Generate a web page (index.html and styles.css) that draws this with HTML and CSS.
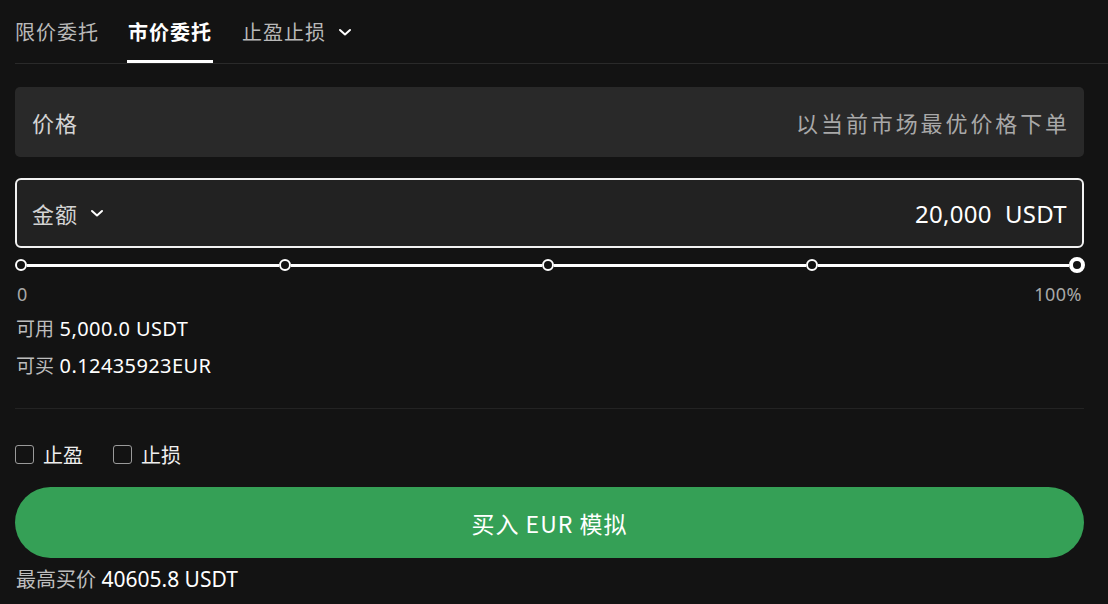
FILE: index.html
```html
<!DOCTYPE html>
<html lang="zh-CN">
<head>
  <meta charset="UTF-8">
  <meta name="viewport" content="width=device-width, initial-scale=1.0">
  <title>市价委托</title>
  <link rel="stylesheet" href="styles.css">
</head>
<body>

  <div class="tabs">
    <div class="tab">限价委托</div>
    <div class="tab active">市价委托</div>
    <div class="tab">止盈止损
      <svg class="chevron" width="14" height="10" viewBox="0 0 14 10"><path d="M2 3l5 4.5L12 3" fill="none" stroke="currentColor" stroke-width="2" stroke-linecap="round" stroke-linejoin="round"/></svg>
    </div>
  </div>

  <div class="field price">
    <span class="field-label">价格</span>
    <span class="field-hint">以当前市场最优价格下单</span>
  </div>

  <div class="field amount">
    <span class="field-label">金额
      <svg class="chevron" width="14" height="10" viewBox="0 0 14 10"><path d="M2 3l5 4.5L12 3" fill="none" stroke="currentColor" stroke-width="2" stroke-linecap="round" stroke-linejoin="round"/></svg>
    </span>
    <span class="field-value">20,000&nbsp; USDT</span>
  </div>

  <div class="slider">
    <span class="dot"></span><span class="seg"></span>
    <span class="dot"></span><span class="seg"></span>
    <span class="dot"></span><span class="seg"></span>
    <span class="dot"></span><span class="seg"></span>
    <span class="dot end"></span>
  </div>
  <div class="slider-labels">
    <span>0</span>
    <span>100%</span>
  </div>

  <div class="info">
    <div class="info-row"><span class="info-key">可用</span> 5,000.0 USDT</div>
    <div class="info-row"><span class="info-key">可买</span> 0.12435923EUR</div>
  </div>

  <div class="options">
    <label class="check"><span class="box"></span>止盈</label>
    <label class="check"><span class="box"></span>止损</label>
  </div>

  <button class="buy">买入 EUR 模拟</button>

  <div class="max-price"><span class="info-key">最高买价</span> 40605.8 USDT</div>

</body>
</html>
```

FILE: styles.css
```css
* {
  box-sizing: border-box;
  margin: 0;
  padding: 0;
}
body {
  background-color: #131313;
  color: #fff;
  font-family: "Noto Sans CJK SC", "Noto Sans", sans-serif;
  padding: 0 24px 0 15px;
  display: flex;
  flex-direction: column;
  height: 100vh;
  overflow: hidden;
}
.tabs {
  display: flex;
  gap: 29px;
  height: 64px;
  margin-right: -24px;
  border-bottom: 1px solid #2a2a2a;
}
.tab {
  display: flex;
  align-items: center;
  gap: 12px;
  height: 63px;
  padding-top: 3px;
  font-size: 20px;
  letter-spacing: 1px;
  color: #b9b9b9;
  border-bottom: 3px solid transparent;
}
.tab.active {
  color: #fff;
  font-weight: bold;
  border-bottom-color: #fff;
  margin-left: -1px;
  padding: 3px 1px 0 1px;
}
.chevron {
  color: #fff;
}
.field {
  display: flex;
  align-items: center;
  justify-content: space-between;
  height: 70px;
  padding: 0 17px;
  border-radius: 5px;
  font-size: 22px;
}
.price {
  margin-top: 23px;
  background-color: #292929;
}
.field-label {
  display: flex;
  align-items: center;
  gap: 12px;
  color: #d4d4d4;
  letter-spacing: 1px;
}
.field-hint {
  color: #a8a8a8;
  letter-spacing: 2.9px;
  margin-right: -3px;
}
.amount {
  margin-top: 21px;
  background-color: #222;
  border: 2px solid #f2f2f2;
  border-radius: 6px;
  padding: 0 15px;
}
.field-value {
  font-family: "Noto Sans", sans-serif;
  font-size: 24px;
  letter-spacing: 0.3px;
}
.slider {
  display: flex;
  align-items: center;
  margin-top: 9px;
  height: 16px;
}
.dot {
  width: 12px;
  height: 12px;
  border: 2px solid #fff;
  border-radius: 50%;
  background-color: #131313;
  flex: none;
}
.dot.end {
  width: 16px;
  height: 16px;
  border-width: 4px;
  margin-right: -1px;
}
.seg {
  flex: 1;
  height: 3px;
  background-color: #fff;
}
.slider-labels {
  display: flex;
  justify-content: space-between;
  margin-top: 9px;
  padding: 0 2px;
  font-family: "Noto Sans", sans-serif;
  font-size: 18px;
  letter-spacing: 0.5px;
  line-height: 24px;
  color: #a8a8a8;
}
.info {
  margin-top: 4px;
  font-size: 20px;
  line-height: 36px;
  padding-left: 1px;
  padding-bottom: 24px;
  border-bottom: 1px solid #232323;
}
.info-row {
  font-family: "Noto Sans", "Noto Sans CJK SC", sans-serif;
  letter-spacing: 0.4px;
}
.info-key {
  font-family: "Noto Sans CJK SC", sans-serif;
  font-size: 19px;
  letter-spacing: 0;
  color: #bdbdbd;
}
.options {
  display: flex;
  gap: 30px;
  margin-top: 32px;
  height: 26px;
}
.check {
  display: flex;
  align-items: center;
  gap: 9px;
  font-size: 20px;
  color: #eee;
}
.box {
  width: 19px;
  height: 19px;
  border: 1.5px solid #9a9a9a;
  border-radius: 3px;
}
.buy {
  margin-top: 20px;
  height: 71px;
  border: none;
  border-radius: 36px;
  background-color: #35a056;
  color: #fff;
  font-family: "Noto Sans CJK SC", sans-serif;
  font-size: 23px;
  letter-spacing: 1px;
  cursor: pointer;
}
.max-price {
  margin-top: 8px;
  font-family: "Noto Sans", "Noto Sans CJK SC", sans-serif;
  font-size: 21px;
  line-height: 26px;
  padding-left: 1px;
}
.max-price .info-key {
  font-size: 20px;
}
```
